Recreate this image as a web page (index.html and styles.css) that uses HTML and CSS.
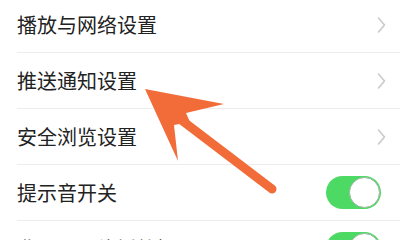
FILE: index.html
```html
<!DOCTYPE html>
<html lang="zh">
<head>
<meta charset="utf-8">
<link rel="stylesheet" href="styles.css">
</head>
<body>
<div class="screen">
  <ul class="list">
    <li class="row"><span class="label">播放与网络设置</span><svg class="chev" viewBox="0 0 9 16" width="9" height="16"><polyline points="1.5,1 7.5,8 1.5,15" /></svg></li>
    <li class="row"><span class="label">推送通知设置</span><svg class="chev" viewBox="0 0 9 16" width="9" height="16"><polyline points="1.5,1 7.5,8 1.5,15" /></svg></li>
    <li class="row"><span class="label">安全浏览设置</span><svg class="chev" viewBox="0 0 9 16" width="9" height="16"><polyline points="1.5,1 7.5,8 1.5,15" /></svg></li>
    <li class="row"><span class="label">提示音开关</span><span class="toggle"><span class="knob"></span></span></li>
    <li class="row"><span class="label">非WiFi网络播放提醒</span><span class="toggle"><span class="knob"></span></span></li>
  </ul>
  <svg class="arrow" viewBox="0 0 400 240" width="400" height="240">
    <line x1="180" y1="119" x2="272" y2="189" stroke="#f26c3a" stroke-width="9" stroke-linecap="round"/>
    <polygon points="145,89 224,104 186,113 190,122 174,125 178,161" fill="#f26c3a"/>
  </svg>
</div>
</body>
</html>
```
FILE: styles.css
```css
html, body {
  margin: 0;
  padding: 0;
  background: #ffffff;
}
.screen {
  position: relative;
  width: 400px;
  height: 240px;
  overflow: hidden;
  font-family: "Noto Sans CJK SC", "Noto Sans", sans-serif;
}
.list {
  list-style: none;
  margin: -3px 0 0 0;
  padding: 0;
}
.row {
  display: flex;
  align-items: center;
  justify-content: space-between;
  height: 55px;
  margin-left: 17px;
  padding-right: 14px;
  border-bottom: 1px solid #ececec;
}
.label {
  font-size: 20px;
  color: #222222;
  line-height: 1;
}
.chev {
  display: block;
  margin-right: 0;
}
.chev polyline {
  fill: none;
  stroke: #c9c9ce;
  stroke-width: 1.6;
  stroke-linecap: round;
  stroke-linejoin: round;
}
.toggle {
  display: flex;
  justify-content: flex-end;
  align-items: center;
  width: 55px;
  height: 33px;
  margin-right: 5px;
  border-radius: 17px;
  background: #4cd964;
  box-sizing: border-box;
  padding: 1px;
}
.knob {
  display: block;
  width: 31px;
  height: 31px;
  border-radius: 50%;
  background: #ffffff;
  box-sizing: border-box;
  border: 1px solid #9fb5a4;
}
.arrow {
  position: absolute;
  left: 0;
  top: 0;
}
```
